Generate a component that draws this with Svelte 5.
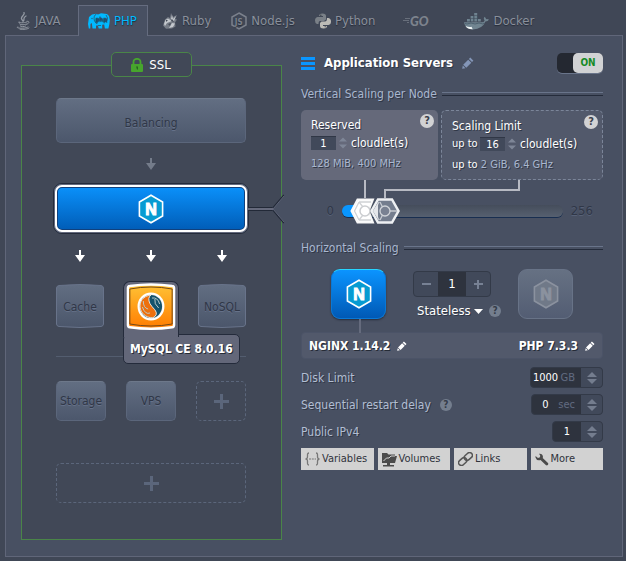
<script>
  let tab = $state('PHP');
  let on = $state(true);
  let reserved = $state(1);
  let limit = $state(16);
  let nodes = $state(1);
  let disk = $state(1000);
  let delay = $state(0);
  let ips = $state(1);
  let scaling = $state('Stateless');
  const tabs = ['JAVA', 'PHP', 'Ruby', 'Node.js', 'Python', 'GO', 'Docker'];
</script>

{#snippet arrow(dim)}
  <svg class="arrow" class:dim width="10" height="12" viewBox="0 0 10 12"><path d="M4 0h2v5h4L5 12 0 5h4z" /></svg>
{/snippet}

{#snippet nginx(muted)}
  <svg class="nginx" class:muted width="28" height="32" viewBox="0 0 28 32">
    <path class="hex" d="M14 2.200 25.600 9v14L14 29.800 2.400 23V9z" />
    <text class="mark" x="14" y="22" text-anchor="middle">N</text>
  </svg>
{/snippet}

{#snippet pencil()}
  <svg width="12" height="12" viewBox="0 0 12 12"><path d="M8.300.6 11.400 3.700 10 5.100 6.900 2zM6.200 2.700 9.300 5.800 4.300 10.800 1.200 7.700zM.8 8.600 3.400 11.200.2 11.800z" fill="currentColor" /></svg>
{/snippet}

{#snippet step(label, change)}
  <span class="step">
    <button type="button" aria-label="Increase {label}" onclick={() => change(1)}><svg width="10" height="5" viewBox="0 0 10 5"><path d="M5 0l5 5H0z" /></svg></button>
    <button type="button" aria-label="Decrease {label}" onclick={() => change(-1)}><svg width="10" height="5" viewBox="0 0 10 5"><path d="M0 0h10L5 5z" /></svg></button>
  </span>
{/snippet}

{#snippet tabIcon(name)}
  {#if name === 'JAVA'}
    <svg width="14" height="18" viewBox="0 0 14 18" fill="none" stroke="#9298a2" stroke-linecap="round">
      <path d="M8 .6C9.500 3 4 4.500 5.700 7.200L7 9.200M10 4C6.500 5.600 8.800 7 7.500 9" stroke-width="1.300" />
      <path d="M3 9.800c-3 1.300 6 1.300 8 .2M11 9.300c3.500-.3 2 2.500-.5 3M3.500 12c0 1 4.500 1 6.500.2M4.200 14c.8 1 4 .8 5.300.1M1.800 14.800c-4 1.600 8.500 2.200 10.200.2M4 17.200c4 .5 8 0 9-1.200" />
    </svg>
  {:else if name === 'PHP'}
    <svg width="22" height="17" viewBox="0 0 22 17">
      <path fill="#00b9ff" d="M4 1.500 8 .8l2 .7 3-1.300 6 .8 2 2 .8 4-.4 4-1 4.500h-3.500l-.7-4-2 .2V15.500h-3.500l-.8-3H8v3H4.500L3.800 10 2.500 11l-.2 4.500H.8L0 11l1-7z" />
      <path fill="none" stroke="#24607f" stroke-width=".9" d="M8.500 1C6 2 5.500 5 6.500 8l2 2.500 1.500-1M18 2l1.500 3-1 4 .5 1M10 12.500h3" />
      <circle cx="4" cy="5.500" r=".7" fill="#24607f" />
      <text x="7.500" y="8" font-size="6" font-weight="700" fill="#234d6c">php</text>
    </svg>
  {:else if name === 'Ruby'}
    <svg width="15" height="16" viewBox="0 0 15 16">
      <path fill="#777d87" d="M2 6.500 5 4l2 1 1-5 2 4 4-2-2 4 2 .5-2 3 .5 4L9 15.500 3 15.800 0 12.500z" />
      <path fill="#c4c8cd" d="M5 5.500 9 8l-5 2-2 3L1 11l1.500-4zM9 10l3 .5L10 14l-4 1zM9 2l1 4 3-3-2 5-3-2z" />
      <path fill="#444b57" d="m5 11 3-1-1 3zM9 6l2 3-3-1zM3 7h2L3 9z" />
    </svg>
  {:else if name === 'Node.js'}
    <svg width="16" height="18" viewBox="0 0 16 18">
      <path d="M8 1 15 5v8l-7 4-7-4V5z" fill="none" stroke="#7b818c" stroke-width="1.500" />
      <text x="3.800" y="12.500" font-size="8" font-weight="700" fill="#7b818c">JS</text>
    </svg>
  {:else if name === 'Python'}
    <svg width="16" height="16" viewBox="0 0 16 16">
      <path fill="#7a8087" d="M4 3Q4 .5 7.500.5T11 3v3.500L9 8H5Q3.500 8 3.500 11H2Q0 10.500 0 7.500T2.500 4H8V3z" />
      <path fill="#bcbbb6" d="M12 5h1.500Q16 5.500 16 8.500T13.500 12H8v1h4q0 2.500-3.500 2.500T5 13v-3l1.500-1.500H10q2 0 2-3.500z" />
      <circle cx="5.800" cy="2.300" r=".8" fill="#41484f" /><circle cx="10.200" cy="13.700" r=".7" fill="#555" />
    </svg>
  {:else if name === 'GO'}
    <svg width="32" height="18" viewBox="0 0 32 18">
      <path d="M2 6.500h5M0 8.500h6M4 10.500h2" stroke="#686f7b" />
      <text class="gologo" x="7" y="14">GO</text>
    </svg>
  {:else}
    <svg width="25" height="17" viewBox="0 0 25 17">
      <path fill="#718591" d="M0 9.200h18q1.800 0 2.600-1.500Q19 5.500 20.500 3.800 22.200 5 22 6.200q1.500-.4 3 .4-1 2-3.600 2Q18.500 16 9 16.500 1 16 0 9.200z" />
      <path fill="#6f8390" d="M3 6h3v2.600H3zM6.600 6h3v2.600h-3zM10.200 6h3v2.600h-3zM13.800 6h3v2.600h-3zM6.600 3h3v2.500h-3zM10.200 3h3v2.500h-3zM10.200 0h3v2.500h-3z" />
      <path stroke="#3e5260" stroke-width=".7" d="M1 10.500q2 1 4 0t4 0 4 0 4 0 3-.5M9.800 3v5M13.400 3v5M6.300 6v3" fill="none" />
      <path fill="#f0f5f5" d="M1.500 13q3.500 1.500 6 .8l1.200 2.500Q3.500 16.500 1.500 13z" />
    </svg>
  {/if}
{/snippet}

<div class="app">
  <nav class="tabs">
    {#each tabs as name}
      <button type="button" class="tab {name === 'PHP' ? 'php' : name === 'JAVA' ? 'java' : name === 'GO' ? 'go' : ''}" class:active={tab === name} aria-label={name} onclick={() => (tab = name)}>
        {@render tabIcon(name)}{#if name !== 'GO'}<span>{name}</span>{/if}
      </button>
    {/each}
  </nav>

  <main class="panel">
    <section class="topology">
      <button type="button" class="ssl">
        <svg width="12" height="14" viewBox="0 0 12 14"><path d="M2.500 6V4a3.500 3.200 0 0 1 7 0v2" fill="none" stroke="#47a52d" stroke-width="1.800" /><rect y="6" width="12" height="8" rx="1" fill="#47a52d" /><path d="M5 8.500h2v3H6z" fill="#286522" /></svg>
        <span>SSL</span>
      </button>
      <button type="button" class="block balancing">Balancing</button>
      <div class="arrows single">{@render arrow(true)}</div>
      <div class="appwrap">
        <button type="button" class="appserver" aria-label="NGINX application server">{@render nginx(false)}</button>
        <svg class="notch" width="36" height="30" viewBox="0 0 36 30"><path d="M36 1v28L23 15z" fill="#485062" /><path d="M0 15h24" stroke="#222937" stroke-width="4" /><path d="M36 1 24 15l12 14" fill="none" stroke="#222937" stroke-width="1.500" /><path d="M0 15h25" stroke="#666a7c" stroke-width="2" /><path d="M36 2 25 15l11 13" fill="none" stroke="#5d6376" stroke-width="1" /></svg>
      </div>
      <div class="arrows">{@render arrow(false)}{@render arrow(false)}{@render arrow(false)}</div>
      <div class="layers">
        <button type="button" class="drum"><svg width="48" height="44" viewBox="0 0 48 44"><path d="M.5 4Q.5 2 3 1.500q21-2 42 0 2.500.5 2.500 2.500v36q0 2-2.500 2.500-21 2-42 0Q.5 42 .5 40z" fill="url(#steel)" stroke="#68738a" /></svg><span>Cache</span></button>
        <div class="database">
          <button type="button" class="mysql" aria-label="MySQL database">
            <svg width="50" height="48" viewBox="0 0 52 48" preserveAspectRatio="none">
              <defs>
                <linearGradient id="steel" x2="0" y2="1"><stop stop-color="#626e82" /><stop offset="1" stop-color="#4b566b" /></linearGradient>
                <linearGradient id="gold" x2="0" y2="1"><stop stop-color="#ffc235" /><stop offset="1" stop-color="#ff7c00" /></linearGradient>
              </defs>
              <path d="M2 5Q2 3.200 4 3q22-3 44 0 2 .2 2 2v37q0 2-2 2.300-22 3-44 0-2-.3-2-2.300z" fill="url(#gold)" stroke="#fff" stroke-width="2.500" />
              <path d="M4 6Q26 2 48 6v35Q26 45 4 41z" fill="none" stroke="#724717" />
              <circle cx="26" cy="23.500" r="13" fill="#e9e6dd" stroke="#fff" stroke-width="2" />
              <circle cx="26" cy="23.500" r="11.500" fill="#14526c" />
              <path d="M26 12C9 14 12 35 28 34.800q6-3 2-8-3-3-5-6-3-6 1-8.800z" fill="#ed700d" stroke="#eae5dc" />
              <path d="M18 18q0 7 5 8M17 24q3 8 8 6M30 16q-1 5 4 9M27 15q6-1 8 6" fill="none" stroke="#b9c9c8" />
            </svg>
          </button>
          <div class="tip">MySQL CE 8.0.16</div>
        </div>
        <button type="button" class="drum"><svg width="48" height="44" viewBox="0 0 48 44"><path d="M.5 4Q.5 2 3 1.500q21-2 42 0 2.500.5 2.500 2.500v36q0 2-2.500 2.500-21 2-42 0Q.5 42 .5 40z" fill="url(#steel)" stroke="#68738a" /></svg><span>NoSQL</span></button>
      </div>
      <hr />
      <div class="extras">
        <button type="button" class="block">Storage</button>
        <button type="button" class="block">VPS</button>
        <button type="button" class="add" aria-label="Add node"><i class="plus"></i></button>
      </div>
      <button type="button" class="add wide" aria-label="Add layer"><i class="plus"></i></button>
    </section>

    <section class="settings">
      <header>
        <svg width="14" height="13" viewBox="0 0 14 13"><path d="M0 0h14v3H0zM0 5h14v3H0zM0 10h14v3H0z" fill="#0a96ff" /></svg>
        <h1>Application Servers</h1>
        <button type="button" class="rename" aria-label="Rename">{@render pencil()}</button>
        <label class="toggle"><input type="checkbox" bind:checked={on} aria-label="Application servers on" /><span>{on ? 'ON' : 'OFF'}</span></label>
      </header>

      <h2>Vertical Scaling per Node</h2>
      <div class="cards">
        <div class="card">
          <div class="name"><span>Reserved</span><button type="button" class="help" aria-label="About reserved cloudlets">?</button></div>
          <div class="amount"><input id="reserved" bind:value={reserved} />{@render step('reserved cloudlets', (d) => (reserved = +reserved + d))}<label for="reserved">cloudlet(s)</label></div>
          <div class="size">128 MiB, 400 MHz</div>
        </div>
        <div class="card dashed">
          <div class="name"><span>Scaling Limit</span><button type="button" class="help" aria-label="About scaling limit">?</button></div>
          <div class="amount"><small>up to</small><input id="limit" bind:value={limit} />{@render step('limit cloudlets', (d) => (limit = +limit + d))}<label for="limit">cloudlet(s)</label></div>
          <div class="size"><b>up to</b> 2 GiB, 6.4 GHz</div>
        </div>
      </div>
      <svg class="leads" viewBox="0 0 302 18" preserveAspectRatio="none"><path d="M64 0v18M218 0v10H84v8" fill="none" stroke="#b7bac3" stroke-width="2" /></svg>
      <div class="slider">
        <span class="min">0</span>
        <div class="track">
          <svg class="handle second" width="30" height="26" viewBox="0 0 30 26">
            <path d="M8 1.500h14L28.500 13 22 24.500H8L1.500 13z" fill="#747d8e" stroke="#eef0f3" stroke-width="2.500" />
            <path d="M10 4 12.500 9M10 22l2.500-5M19.500 13H27M9 4 4 13l5 9" fill="none" stroke="#c6cad1" stroke-width="1.300" /><path d="M3 13 8 5v16z" fill="#e4e6ea" /><circle cx="15" cy="13" r="5" fill="#798192" stroke="#d1d4d9" stroke-width="1.300" />
          </svg>
          <svg class="handle first" width="26" height="26" viewBox="0 0 26 26">
            <path d="M7.500 1.500H23L18.500 13 23 24.500H7.500L1.500 13z" fill="#fff" stroke="#f8f8f8" stroke-width="2" />
            <path d="M9 4h12M9 22h12M9 4 4.500 13 9 22M9 4l4 5M9 22l4-5" fill="none" stroke="#d0d2d5" stroke-width="1.300" /><circle cx="15" cy="13" r="5" fill="#fff" stroke="#cbcdd0" stroke-width="1.500" />
          </svg>
          <input type="range" min="0" max="256" bind:value={limit} aria-label="Scaling limit cloudlets" />
        </div>
        <span class="max">256</span>
      </div>

      <h2>Horizontal Scaling</h2>
      <div class="scale">
        <button type="button" class="tile" aria-label="NGINX">{@render nginx(false)}</button>
        <div class="middle">
          <div class="counter"><button type="button" aria-label="Fewer nodes" onclick={() => nodes--}><i class="plus minus"></i></button><input aria-label="Nodes" bind:value={nodes} /><button type="button" aria-label="More nodes" onclick={() => nodes++}><i class="plus"></i></button></div>
          <div class="mode">
            <select aria-label="Scaling mode" bind:value={scaling}><option>Stateless</option><option>Stateful</option></select>
            <svg class="caret" width="9" height="5" viewBox="0 0 9 5"><path d="M0 0h9L4.500 5z" fill="#fff" /></svg>
            <button type="button" class="help gray" aria-label="About scaling mode">?</button>
          </div>
        </div>
        <button type="button" class="tile off" aria-label="PHP server">{@render nginx(true)}</button>
      </div>
      <div class="versions">
        <button type="button">NGINX 1.14.2 {@render pencil()}</button>
        <button type="button">PHP 7.3.3 {@render pencil()}</button>
      </div>

      <div class="row"><label for="disk">Disk Limit</label><div class="field"><input id="disk" class="w4" bind:value={disk} /><em>GB</em>{@render step('disk limit', (d) => (disk = +disk + d))}</div></div>
      <div class="row"><label for="delay">Sequential restart delay</label><button type="button" class="help gray" aria-label="About restart delay">?</button><div class="field"><input id="delay" class="w2" bind:value={delay} /><em>sec</em>{@render step('restart delay', (d) => (delay = +delay + d))}</div></div>
      <div class="row"><label for="ips">Public IPv4</label><div class="field"><input id="ips" class="w3" bind:value={ips} />{@render step('public addresses', (d) => (ips = +ips + d))}</div></div>

      <div class="actions">
        <button type="button"><svg width="15" height="14" viewBox="0 0 15 14" fill="none" stroke="#777"><path d="M4 1Q2.500 1 2.500 2.500v2Q2.500 7 .5 7q2 0 2 2.500v2Q2.500 13 4 13M11 1q1.500 0 1.500 1.500v2Q12.500 7 14.500 7q-2 0-2 2.500v2Q12.500 13 11 13" stroke-width="1.300" /><path d="M4 7h7" stroke-dasharray="2 .8" /></svg>Variables</button>
        <button type="button"><svg width="15" height="15" viewBox="0 0 15 15"><path d="M0 1h5l1.500 1.500H13V4h2l-2 7H0zM1 13h11v1.500H1zM5 11h3v3H5z" fill="#4b4b4b" /><path d="m1.500 9 3-3H7L9 4h4" fill="none" stroke="#d2d2d2" /></svg>Volumes</button>
        <button type="button"><svg width="15" height="14" viewBox="0 0 15 14"><g transform="rotate(-42 7.500 7)" fill="none" stroke="#555" stroke-width="1.500"><rect x="-.8" y="4.200" width="9" height="5.600" rx="2.800" /><rect x="6.800" y="4.200" width="9" height="5.600" rx="2.800" /></g></svg>Links</button>
        <button type="button"><svg width="14" height="13" viewBox="0 0 14 13"><path d="M4 .8Q7.500.3 8 4l-.3 1L13 10q.8 1.200-.2 2t-2-.1L5.500 7Q1.500 8 .5 4.500V3l2.500 2 2-.8.2-1.700z" fill="#4b4b4b" /></svg>More</button>
      </div>
    </section>
  </main>
</div>

<style>
  :global(body) { margin: 0; background: #404756; }
  .app { padding: 5px 3px 4px 5px; font: 12px/16px "DejaVu Sans Condensed", "DejaVu Sans", sans-serif; color: #b2bed2; }
  * { box-sizing: border-box; }
  button, input, select { font: inherit; color: inherit; margin: 0; padding: 0; border: 0; background: none; }
  button { cursor: pointer; }
  svg { display: block; flex: none; }

  .tabs { display: flex; height: 31px; position: relative; z-index: 1; }
  .tab { display: flex; align-items: center; gap: 4px; height: 31px; padding: 0 0 0 20px; font-size: 13px; color: #8a909b; text-shadow: 0 1px 1px #252c3a; white-space: nowrap; border: 1px solid transparent; border-width: 1px 0 0; }
  .tab.java { width: 73px; padding-left: 11px; gap: 5px; }
  .tab.php { width: 70px; padding-left: 9px; margin-right: -5px; }
  .tab.go { padding: 0 9px 0 28px; }
  .tab.active { background: #485062; border: 1px solid #656c7f; border-bottom: 0; color: #00b9ff; }
  .gologo { fill: #7d838d; font: italic 900 13px "Lato", sans-serif; text-shadow: none; }

  .panel { display: grid; grid-template-columns: 261fr 302fr; gap: 19px; margin-top: -1px; padding: 16px 19px 16px 15px; border: 1px solid #606679; background: #485062; }

  .topology { display: flex; flex-direction: column; align-items: stretch; margin-top: 13px; padding: 0 35px 36px 34px; border: 1px solid #4a8548; background: #414857; }
  .ssl { display: flex; align-items: center; justify-content: center; gap: 6px; align-self: center; width: 81px; height: 25px; margin: -14px 0 21px; border: 1px solid #4a8548; border-radius: 5px; background: #414857; color: #fff; font-size: 13px; }
  .block { height: 40px; border: 1px solid #5b667b; border-top-color: #6d788a; border-radius: 5px; background: linear-gradient(#626e82, #4c576c); color: #303747; text-shadow: 0 1px #66728a; }
  .balancing { height: 45px; padding-top: 4px; }
  .arrows { display: flex; justify-content: space-between; height: 12px; margin: 16px 19px 22px; }
  .arrows.single { justify-content: center; margin: 15px 0 13px; }
  .arrow path { fill: #fff; }
  .arrow.dim path { fill: #747c8a; }
  .appwrap { position: relative; margin: 0 -3px; }
  .appserver { display: grid; place-items: center; width: 100%; height: 51px; border: 1px solid #242b3b; border-radius: 9px; background: linear-gradient(#0b94ff, #0059b2) padding-box; box-shadow: inset 0 0 0 1px #646a7e, inset 0 0 0 3px #fff, inset 0 0 0 4px #10417e; }
  .notch { position: absolute; left: 100%; top: 11px; margin-left: -1px; }
  .hex { fill: #069bd2; stroke: #fff; stroke-width: 1.600; }
  .mark { fill: #fff; stroke: #fff; stroke-width: 1; font: 700 16px "Liberation Sans", sans-serif; text-shadow: none; }
  .muted .hex { fill: #707988; stroke: #8b929f; }
  .muted .mark { fill: #8b929f; stroke: #8b929f; }
  .layers, .extras { display: flex; justify-content: space-between; }
  .drum { position: relative; width: 48px; height: 44px; color: #303747; text-shadow: 0 1px #66728a; }
  .drum span { position: absolute; top: 15px; left: -5px; right: -5px; text-align: center; }
  .database { position: relative; }
  .mysql { position: absolute; z-index: 2; left: -28px; top: -3px; width: 56px; height: 56px; padding: 1px 2px 0; border: 1px solid #242b3b; border-bottom: 0; border-radius: 7px 7px 0 0; background: #636779; }
  .mysql svg { margin-top: -6px; }
  .tip { position: absolute; z-index: 1; left: -28px; top: 50px; height: 30px; padding: 6px; border: 1px solid #242b3b; border-radius: 5px; background: #636779; color: #fff; font-weight: 700; text-shadow: 1px 1px #252b36; white-space: nowrap; }
  hr { width: 100%; margin: 28px 0 24px; border: 0; border-top: 1px solid #535d6f; }
  .extras .block, .extras .add { width: 50px; }
  .add { display: grid; place-items: center; height: 40px; border: 1px dashed #5b667b; border-radius: 5px; }
  .add.wide { margin-top: 42px; }
  .plus { display: block; width: 15px; height: 15px; background: linear-gradient(#5b667b, #5b667b) center / 100% 3px no-repeat, linear-gradient(#5b667b, #5b667b) center / 3px 100% no-repeat; }

  .settings { min-width: 0; text-shadow: 1px 1px #303746; }
  header { display: flex; align-items: center; gap: 9px; height: 20px; margin-top: 1px; }
  h1 { margin: 0; color: #fff; font-size: 13px; line-height: 20px; white-space: nowrap; }
  .rename { color: #8496b8; }
  .toggle { display: flex; justify-content: flex-end; width: 46px; height: 20px; margin-left: auto; border-radius: 5px; background: #242831; box-shadow: 0 1px #69748a; }
  .toggle input { position: absolute; width: 46px; height: 20px; opacity: 0; }
  .toggle span { width: 30px; border-radius: 5px; background: #d1d2d4; color: #168a26; font-size: 10px; font-weight: 700; line-height: 20px; text-align: center; text-shadow: none; }
  h2 { display: flex; align-items: center; gap: 5px; height: 16px; margin: 13px 0 8px; font-size: 12px; font-weight: 400; color: #a9b7cf; white-space: nowrap; }
  h2::after { content: ''; flex: 1; height: 2px; border-top: 1px solid #69748a; border-bottom: 1px solid #252c3b; }
  .cards { display: grid; grid-template-columns: 137fr 162fr; gap: 3px; }
  .card { height: 70px; padding: 6px 4px 0 10px; border-radius: 5px; background: #65697a; color: #fff; white-space: nowrap; overflow: hidden; }
  .dashed { border: 1px dashed #7b8599; background: #52596b; }
  .name { display: flex; justify-content: space-between; height: 18px; line-height: 18px; }
  .name .help { margin-top: -2px; }
  .help { flex: none; width: 14px; height: 14px; border-radius: 50%; background: #d2d2d4; color: #3c404b; font-size: 11px; font-weight: 700; line-height: 14px; text-align: center; text-shadow: none; }
  .help.gray { width: 12px; height: 12px; line-height: 12px; background: #747e8e; color: #353c49; font-size: 10px; }
  .amount { display: flex; align-items: center; height: 18px; }
  .amount input { width: 25px; height: 14px; margin-right: 3px; background: #41495a; border-top: 1px solid #303746; text-align: center; font-size: 11px; line-height: 13px; }
  .amount small { width: 28px; font-size: 11px; }
  .amount label { margin-left: 4px; }
  .size { margin-top: 4px; color: #a9b7cf; font-size: 11px; }
  .size b { font-weight: 400; color: #fff; }
  .step { display: flex; flex-direction: column; justify-content: center; gap: 2px; }
  .step button { width: 8px; height: 5px; }
  .step svg { width: 8px; }
  .step path { fill: #7e8697; }
  .leads { width: 100%; height: 18px; }
  .slider { display: flex; align-items: center; height: 26px; color: #303747; font-size: 13px; text-shadow: 0 1px #576177; padding-right: 10px; }
  .min { width: 41px; padding-right: 8px; text-align: right; }
  .max { padding-left: 8px; }
  .track { position: relative; flex: 1; height: 12px; border-radius: 6px; background: linear-gradient(90deg, #0996ff 12px, transparent 12px), linear-gradient(#454d5b, #566070); box-shadow: 0 1px #182e50; }
  .track input { position: absolute; inset: 0; width: 100%; height: 12px; opacity: 0; }
  .handle { position: absolute; top: -7px; }
  .first { left: 8px; }
  .second { left: 28px; }
  .slider + h2 { margin: 16px 0 13px; }
  .scale { display: flex; justify-content: space-between; padding: 0 30px; }
  .tile { display: grid; place-items: center; width: 55px; height: 50px; border: 1px solid #0878d7; border-top-color: #27d5ff; border-radius: 9px; background: linear-gradient(#0b94ff, #0059b5); box-shadow: 0 1px 2px #252c3b; }
  .tile.off { border-color: #687387; background: linear-gradient(#667183, #535d73); box-shadow: none; }
  .middle { padding: 2px 0 0 10px; }
  .counter { display: flex; width: 78px; height: 26px; border: 1px solid #333a48; border-radius: 4px; overflow: hidden; background: #41495a; }
  .counter button { display: grid; place-items: center; flex: 1; }
  .counter input { width: 28px; background: #2e333e; color: #fff; text-align: center; font-size: 13px; }
  .counter .plus { width: 9px; height: 9px; background: linear-gradient(#778194, #778194) center / 100% 2px no-repeat, linear-gradient(#778194, #778194) center / 2px 100% no-repeat; }
  .counter .minus { background: linear-gradient(#778194, #778194) center / 100% 2px no-repeat; }
  .mode { display: flex; align-items: center; width: 84px; height: 16px; margin: 6px 0 0 4px; }
  .mode select { appearance: none; width: 57px; color: #fff; font-size: 13px; text-shadow: inherit; }
  .mode .help { margin-left: 6px; }
  .versions { position: relative; display: flex; justify-content: space-between; height: 27px; margin: 13px 0 8px; padding: 0 7px; border: 1px solid #4b5367; border-radius: 4px; background: #52596b; color: #fff; font-weight: 700; }
  .versions::before { content: ''; position: absolute; left: 57px; bottom: 100%; width: 2px; height: 14px; background: #656b7d; }
  .versions button { display: flex; align-items: center; gap: 7px; text-shadow: 1px 1px #252b36; }
  .versions svg { width: 10px; height: 10px; }
  .row { display: flex; align-items: center; gap: 9px; height: 21px; margin-bottom: 6px; white-space: nowrap; }
  .field { display: flex; height: 21px; margin-left: auto; border: 1px solid #333a48; border-radius: 4px; overflow: hidden; background: #2e333e; }
  .field input { color: #fff; text-align: center; font-size: 11px; }
  .field em { align-self: center; padding-right: 6px; color: #626b80; font-size: 11px; font-style: normal; }
  .w4 { width: 30px; }
  .w2 { width: 26px; }
  .w3 { width: 28px; }
  .field .step { width: 21px; align-items: center; background: #41495a; }
  .field .step button { width: 10px; }
  .field .step svg { width: 10px; }
  .field .step path { fill: #747d8e; }
  .actions { display: grid; grid-template-columns: repeat(4, 1fr); gap: 4px; }
  .actions button { display: flex; align-items: center; gap: 2px; height: 22px; padding: 0 0 0 4px; background: #d2d2d2; color: #30333c; font-size: 11px; white-space: nowrap; text-shadow: none; }
</style>
